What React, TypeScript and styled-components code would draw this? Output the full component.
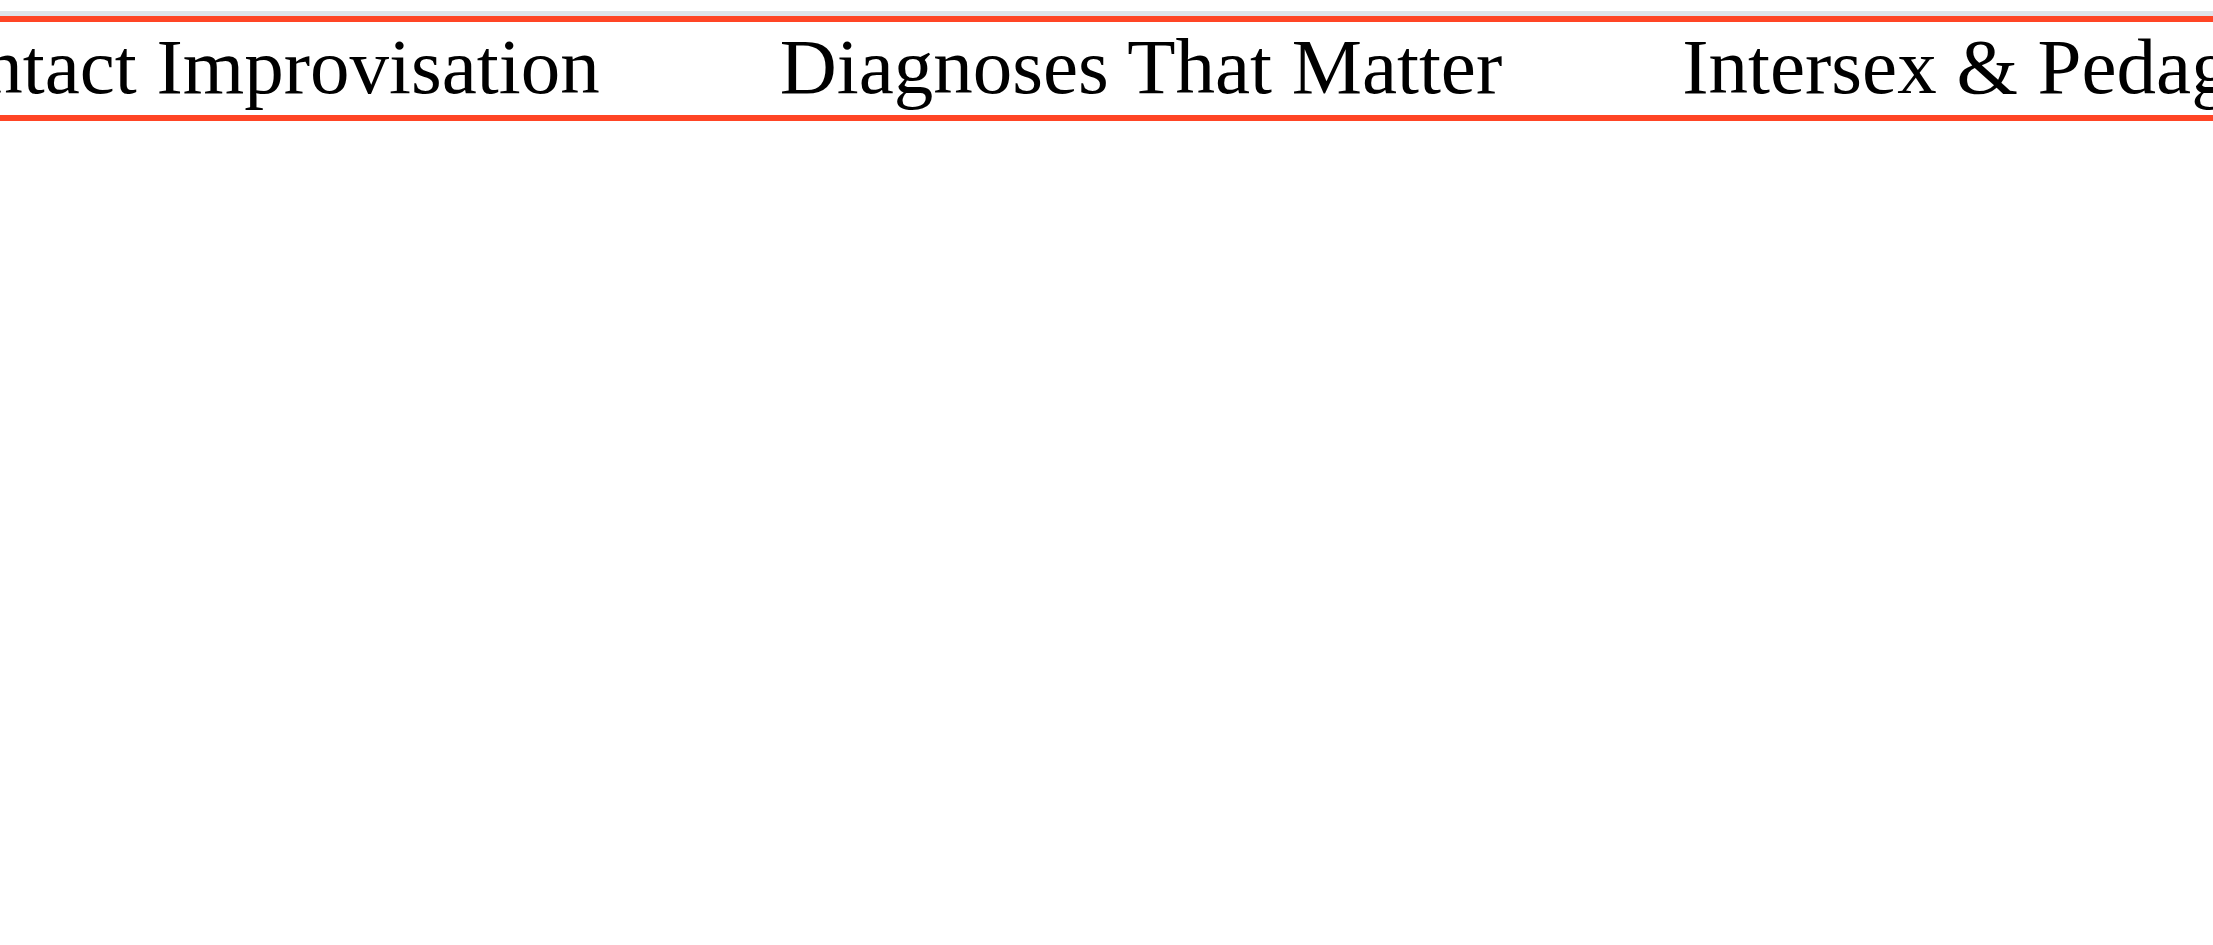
import styled, { createGlobalStyle } from 'styled-components';

const GlobalStyle = createGlobalStyle`
  html, body {
    margin: 0;
    padding: 0;
    background: #ffffff;
  }
  body {
    font-family: 'Liberation Serif', 'Times New Roman', serif;
  }
`;

const Page = styled.div`
  padding-top: 11px;
  width: 100%;
  min-height: 945px;
  background: #ffffff;
`;

const Ticker = styled.div`
  border-top: 5px solid #dfe3e9;
`;

const Band = styled.div`
  border-top: 6px solid #ff4525;
  border-bottom: 6px solid #ff4525;
  padding: 0 0 3px;
  overflow: hidden;
  white-space: nowrap;
`;

const Track = styled.div<{ offset: number }>`
  display: flex;
  gap: 180px;
  transform: translateX(${(p) => -p.offset}px);
`;

const Item = styled.span`
  flex: none;
  font-family: 'Liberation Serif', 'Times New Roman', serif;
  font-size: 79px;
  line-height: normal;
  color: #000000;
`;

const topics = [
  'Contact Improvisation',
  'Diagnoses That Matter',
  'Intersex & Pedagogy',
  'Contact Improvisation',
  'Diagnoses That Matter',
];

export default function App() {
  return (
    <>
      <GlobalStyle />
      <Page>
        <Ticker>
          <Band>
            <Track offset={109}>
              {topics.map((t, i) => (
                <Item key={i}>{t}</Item>
              ))}
            </Track>
          </Band>
        </Ticker>
      </Page>
    </>
  );
}
